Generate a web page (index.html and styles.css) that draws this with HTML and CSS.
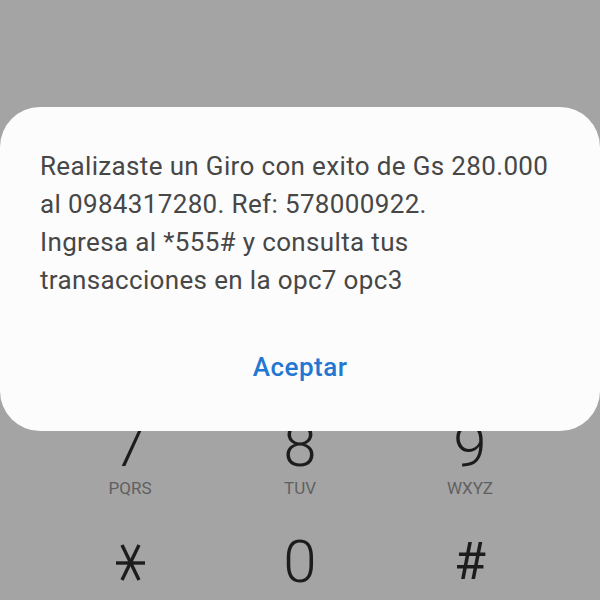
FILE: index.html
```html
<!DOCTYPE html>
<html lang="es">
<head>
<meta charset="utf-8">
<link rel="stylesheet" href="styles.css">
</head>
<body>
<div class="keypad">
  <div class="key"><span class="digit">7</span><span class="letters">PQRS</span></div>
  <div class="key"><span class="digit">8</span><span class="letters">TUV</span></div>
  <div class="key"><span class="digit">9</span><span class="letters">WXYZ</span></div>
  <div class="key">
    <svg class="star" width="60" height="60" viewBox="0 0 60 60" aria-label="*">
      <line x1="16" y1="31" x2="45" y2="31"/>
      <line x1="22" y1="13" x2="39" y2="48"/>
      <line x1="39" y1="13" x2="22" y2="48"/>
    </svg>
  </div>
  <div class="key"><span class="digit">0</span></div>
  <div class="key"><span class="digit hash">#</span></div>
</div>

<div class="dialog">
  <p class="message">Realizaste un Giro con exito de Gs 280.000<br>al 0984317280. Ref: 578000922.<br>Ingresa al *555# y consulta tus<br>transacciones en la opc7 opc3</p>
  <div class="actions"><span class="accept">Aceptar</span></div>
</div>
</body>
</html>
```
FILE: styles.css
```css
html, body {
  margin: 0;
  padding: 0;
}
body {
  width: 600px;
  height: 600px;
  overflow: hidden;
  background: #a4a4a4;
  font-family: Roboto, "Noto Sans", sans-serif;
  position: relative;
}
.keypad {
  padding-top: 416px;
  padding-left: 45px;
  display: grid;
  grid-template-columns: repeat(3, 170px);
  row-gap: 34px;
}
.key {
  display: flex;
  flex-direction: column;
  align-items: center;
  height: 82px;
}
.digit {
  font-size: 60px;
  line-height: 60px;
  font-weight: 300;
  color: #1c1c1c;
}
.hash {
  font-size: 52px;
  font-weight: 400;
  margin-top: 0;
}
.letters {
  margin-top: 2px;
  font-size: 17px;
  line-height: 20px;
  color: #606060;
}
.star {
  stroke: #1c1c1c;
  stroke-width: 3.4;
  fill: none;
}
.dialog {
  position: absolute;
  left: 0;
  top: 107px;
  width: 600px;
  height: 324px;
  box-sizing: border-box;
  background: #fcfcfc;
  border-radius: 40px;
  padding: 40px 40px 0 40px;
}
.message {
  margin: 0;
  font-size: 26px;
  line-height: 38px;
  letter-spacing: 0.35px;
  color: #474747;
  white-space: nowrap;
}
.actions {
  margin-top: 49px;
  display: flex;
  justify-content: center;
}
.accept {
  font-size: 26px;
  line-height: 38px;
  letter-spacing: 0.5px;
  font-weight: 500;
  color: #2377d1;
}
```
